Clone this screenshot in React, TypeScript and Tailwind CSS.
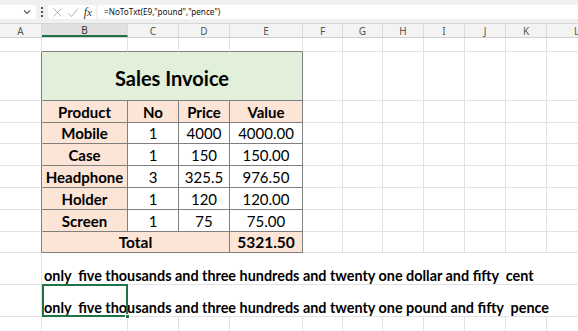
import React from 'react';

const COLS = ['w-[42px]', 'w-[86px]', 'w-[51px]', 'w-[51px]', 'w-[73px]', 'w-[40px]', 'w-[40px]', 'w-[41px]', 'w-[41px]', 'w-[41px]', 'w-[41px]', 'w-[60px]'];
const LETTERS = ['A', 'B', 'C', 'D', 'E', 'F', 'G', 'H', 'I', 'J', 'K', 'L'];

const grid = 'border-r border-b border-[#e1e1e1]';
const tb = 'border-r border-b border-[#7f7f7f]';
const font = "font-['Lato',sans-serif]";

const Blank = ({ w, extra = '' }: { w: string; extra?: string }) => (
  <div className={`${w} shrink-0 h-full box-border ${extra || grid}`} />
);

const TailCells = ({ from }: { from: number }) => (
  <>
    {COLS.slice(from).map((w, i) => (
      <Blank key={i} w={w} />
    ))}
  </>
);

const DataRow = ({ h, cells }: { h: string; cells: { text: string; bold?: boolean; fill?: boolean }[] }) => (
  <div className={`flex ${h}`}>
    <Blank w={COLS[0]} extra="border-r border-b border-r-[#7f7f7f] border-b-[#e1e1e1]" />
    {cells.map((c, i) => (
      <div
        key={i}
        className={`${COLS[i + 1]} shrink-0 h-full box-border ${tb} flex items-end justify-center text-[15px] leading-[20px] text-black ${c.bold ? 'font-bold text-[15.5px]' : ''} ${c.fill ? 'bg-[#fce4d6]' : 'bg-white'}`}
      >
        {c.text}
      </div>
    ))}
    <TailCells from={5} />
  </div>
);

const rows = [
  { h: 'h-[21px]', p: 'Mobile', n: '1', pr: '4000', v: '4000.00' },
  { h: 'h-[22px]', p: 'Case', n: '1', pr: '150', v: '150.00' },
  { h: 'h-[22px]', p: 'Headphone', n: '3', pr: '325.5', v: '976.50' },
  { h: 'h-[22px]', p: 'Holder', n: '1', pr: '120', v: '120.00' },
  { h: 'h-[22px]', p: 'Screen', n: '1', pr: '75', v: '75.00' },
];

export default function App() {
  return (
    <div className={`w-[578px] h-[331px] overflow-hidden bg-white ${font}`}>
      {/* formula bar */}
      <div className="h-[24px] bg-[#f0f0f0] flex items-center pt-[4px] pb-[3px] border-b border-[#d6d6d6] font-['Noto_Sans',sans-serif]">
        <div className="w-[36px] h-[14px] bg-white rounded-r-[3px] flex items-center justify-end pr-[5px]">
          <svg width="8" height="6" viewBox="0 0 8 6" className="text-[#555]">
            <path d="M1 1.5 L4 4.5 L7 1.5" fill="none" stroke="currentColor" strokeWidth="1.1" />
          </svg>
        </div>
        <div className="w-[12px] flex flex-col items-center gap-[2px]">
          <span className="w-[2px] h-[2px] bg-[#555]" />
          <span className="w-[2px] h-[2px] bg-[#555]" />
          <span className="w-[2px] h-[2px] bg-[#555]" />
        </div>
        <div className="w-[48px] h-[14px] bg-white rounded-[3px] flex items-center justify-between px-[4px]">
          <svg width="11" height="11" viewBox="0 0 11 11">
            <path d="M1.5 1.5 L9.5 9.5 M9.5 1.5 L1.5 9.5" stroke="#b3b3b3" strokeWidth="1" />
          </svg>
          <svg width="12" height="11" viewBox="0 0 12 11">
            <path d="M1 6 L4.5 9.5 L11 1.5" fill="none" stroke="#b3b3b3" strokeWidth="1" />
          </svg>
          <span className="font-['Liberation_Serif',serif] italic text-[12px] leading-[12px] text-[#333]">
            f<span className="text-[11px]">x</span>
          </span>
        </div>
        <div className="flex-1 ml-[2px] h-[14px] bg-white rounded-l-[3px] flex items-center pl-[6px] text-[8.2px] text-[#111] whitespace-pre">
          =NoToTxt(E9,"pound","pence")
        </div>
      </div>
      {/* column headers */}
      <div className="flex h-[14px] bg-[#f3f3f3] border-b border-[#d0d0d0] font-['Noto_Sans',sans-serif] text-[10px] text-[#555]">
        {COLS.map((w, i) => (
          <div
            key={i}
            className={`${w} shrink-0 h-full box-border border-r border-[#dadada] flex items-center justify-center leading-none ${i === 1 ? 'bg-[#e0e0e0] border-b-2 border-b-[#217346] text-[#333]' : ''}`}
          >
            {LETTERS[i]}
          </div>
        ))}
      </div>
      {/* row 1 */}
      <div className="flex h-[14px]">
        <Blank w={COLS[0]} />
        {COLS.slice(1, 5).map((w, i) => (
          <Blank key={i} w={w} extra="border-r border-b border-r-[#e1e1e1] border-b-[#7f7f7f]" />
        ))}
        <TailCells from={5} />
      </div>
      {/* title */}
      <div className="flex h-[49px]">
        <Blank w={COLS[0]} extra="border-r border-b border-r-[#7f7f7f] border-b-[#e1e1e1]" />
        <div className={`w-[261px] shrink-0 h-full box-border ${tb} bg-[#e2efda] flex items-center justify-center text-[20px] font-bold text-black pt-[3px]`}>
          Sales Invoice
        </div>
        <TailCells from={5} />
      </div>
      <DataRow
        h="h-[22px]"
        cells={[
          { text: 'Product', bold: true, fill: true },
          { text: 'No', bold: true, fill: true },
          { text: 'Price', bold: true, fill: true },
          { text: 'Value', bold: true, fill: true },
        ]}
      />
      {rows.map((r) => (
        <DataRow
          key={r.p}
          h={r.h}
          cells={[
            { text: r.p, bold: true, fill: true },
            { text: r.n },
            { text: r.pr },
            { text: r.v },
          ]}
        />
      ))}
      {/* total */}
      <div className="flex h-[21px]">
        <Blank w={COLS[0]} extra="border-r border-b border-r-[#7f7f7f] border-b-[#e1e1e1]" />
        <div className={`w-[188px] shrink-0 h-full box-border ${tb} bg-[#fce4d6] flex items-end justify-center text-[15.5px] leading-[20px] font-bold text-black`}>
          Total
        </div>
        <div className={`${COLS[4]} shrink-0 h-full box-border ${tb} bg-[#fce4d6] flex items-end justify-center text-[15.5px] leading-[20px] font-bold text-black`}>
          5321.50
        </div>
        <TailCells from={5} />
      </div>
      {/* words rows */}
      <div className="flex h-[32px]">
        <Blank w={COLS[0]} />
        <div className="flex-1 h-full box-border border-b border-[#e1e1e1] flex items-end pl-[2px] pb-[2px] text-[14.4px] leading-[13px] font-bold text-black whitespace-pre">
          only  five thousands and three hundreds and twenty one dollar and fifty  cent
        </div>
      </div>
      <div className="flex h-[32px]">
        <Blank w={COLS[0]} />
        <div className="relative flex-1 h-full box-border border-b border-[#e1e1e1] flex items-end pl-[2px] pb-[2px] text-[14.4px] leading-[13px] font-bold text-black whitespace-pre">
          <div className="absolute left-0 top-[-1px] w-[86px] h-[33px] border-2 border-[#217346] box-border pointer-events-none">
            <span className="absolute right-[-4px] bottom-[-4px] w-[5px] h-[5px] bg-[#217346] border border-white" />
          </div>
          only  five thousands and three hundreds and twenty one pound and fifty  pence
        </div>
      </div>
      <div className="flex h-[20px]">
        <TailCells from={0} />
      </div>
    </div>
  );
}
